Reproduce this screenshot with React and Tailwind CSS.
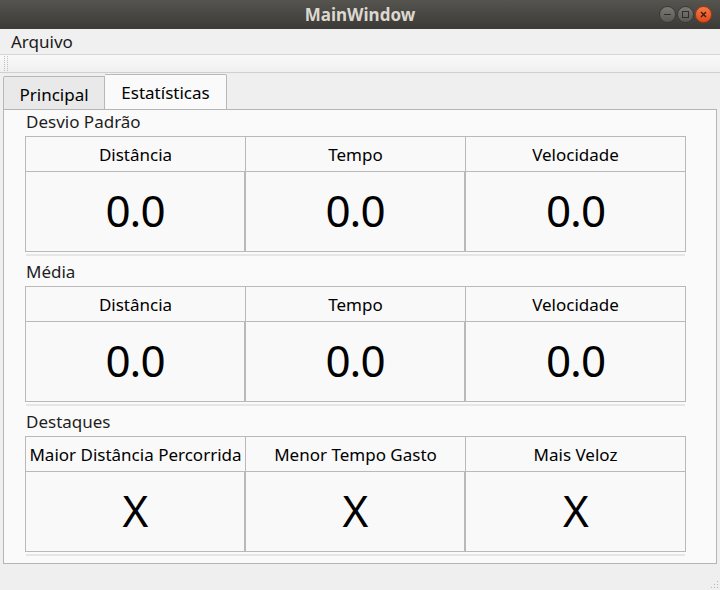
import React from 'react';

const sections = [
  { title: 'Desvio Padrão', heads: ['Distância', 'Tempo', 'Velocidade'], values: ['0.0', '0.0', '0.0'] },
  { title: 'Média', heads: ['Distância', 'Tempo', 'Velocidade'], values: ['0.0', '0.0', '0.0'] },
  { title: 'Destaques', heads: ['Maior Distância Percorrida', 'Menor Tempo Gasto', 'Mais Veloz'], values: ['X', 'X', 'X'] },
];

const StatTable = ({ title, heads, values }) => (
  <div className="flex flex-col">
    <div className="h-[24px] pl-[22px] text-[17px] leading-[20px] text-[#1e1e1e]">{title}</div>
    <div className="ml-[21px] w-[661px] border border-[#b9b9b9] bg-[#f9f9f9]">
      <div className="flex h-[35px] border-b border-[#b9b9b9]">
        {heads.map((h, i) => (
          <div
            key={i}
            className={
              i < 2
                ? 'w-[220px] border-r border-[#b9b9b9] flex items-center justify-center text-[17px] whitespace-nowrap'
                : 'flex-1 flex items-center justify-center text-[17px] whitespace-nowrap'
            }
          >
            {h}
          </div>
        ))}
      </div>
      <div className="flex h-[79px]">
        {values.map((v, i) => (
          <div
            key={i}
            className={
              i < 2
                ? 'w-[220px] border-r-2 border-[#b9b9b9] flex items-center justify-center text-[44px] tracking-[-1px] pb-[4px]'
                : 'flex-1 flex items-center justify-center text-[44px] tracking-[-1px] pb-[4px]'
            }
          >
            {v}
          </div>
        ))}
      </div>
    </div>
    <div className="ml-[22px] mt-[2px] w-[659px] h-[2px] bg-[#e6e6e6]" />
  </div>
);

export default function App() {
  return (
    <div className="w-[720px] h-[590px] bg-[#efefef] flex flex-col text-black font-['Noto_Sans',sans-serif] overflow-hidden">
      {/* title bar */}
      <div className="relative h-[29px] bg-gradient-to-b from-[#56544f] to-[#3b3a36] flex items-center justify-center">
        <span className="text-[17px] font-bold text-[#dcd8d0]">MainWindow</span>
        <div className="absolute right-[8px] top-[6px] flex gap-[1px]">
          <div className="w-[17px] h-[17px] rounded-full bg-gradient-to-b from-[#7a7974] to-[#5a5954] border border-[#3a3935] flex items-center justify-center">
            <div className="w-[7px] h-[1.5px] bg-[#2f2e2b]" />
          </div>
          <div className="w-[17px] h-[17px] rounded-full bg-gradient-to-b from-[#7a7974] to-[#5a5954] border border-[#3a3935] flex items-center justify-center">
            <div className="w-[7px] h-[7px] border border-[#2f2e2b]" />
          </div>
          <div className="w-[17px] h-[17px] rounded-full bg-gradient-to-b from-[#f37a48] to-[#df4a16] border border-[#a8360f] flex items-center justify-center">
            <svg width="7" height="7" viewBox="0 0 7 7">
              <path d="M1 1 L6 6 M6 1 L1 6" stroke="#3a1a0c" strokeWidth="1.3" />
            </svg>
          </div>
        </div>
      </div>
      {/* menu bar */}
      <div className="h-[27px] bg-[#f0f0f0] border-b border-[#d6d6d6] flex items-center pl-[11px]">
        <span className="text-[17px] text-[#1a1a1a]">Arquivo</span>
      </div>
      {/* toolbar */}
      <div className="h-[18px] bg-gradient-to-b from-[#f9f9f9] to-[#f0f0f0] border-b border-[#cfcfcf] flex items-center pl-[4px]">
        <div className="h-[15px] w-[4px] border-l border-r border-dotted border-[#bdbdbd]" />
      </div>
      {/* tab widget */}
      <div className="flex-1 flex flex-col pt-[1px]">
        <div className="flex items-end h-[35px] pl-[3px]">
          <div className="h-[33px] w-[102px] bg-[#e9e9e9] border border-b-0 border-[#b8b8b8] rounded-tl-[2px] flex items-center justify-center text-[17px] pt-[2px]">
            Principal
          </div>
          <div className="h-[35px] w-[122px] bg-[#fafafa] border border-b-0 border-l-0 border-[#b8b8b8] rounded-tr-[2px] flex items-center justify-center text-[17px]">
            Estatísticas
          </div>
        </div>
        <div className="ml-[3px] w-[714px] h-[455px] border border-[#b5b5b5] bg-[#fafafa] pt-[2px] flex flex-col gap-[6px]">
          {sections.map((s, i) => (
            <StatTable key={i} {...s} />
          ))}
        </div>
      </div>
      {/* status bar */}
      <div className="h-[26px] relative">
        <div className="absolute right-[2px] bottom-[2px] grid grid-cols-3 gap-[2px]">
          {[0, 0, 1, 0, 1, 1, 1, 1, 1].map((d, i) => (
            <div key={i} className={d ? 'w-[1px] h-[1px] bg-[#b5b5b5]' : 'w-[1px] h-[1px]'} />
          ))}
        </div>
      </div>
    </div>
  );
}
